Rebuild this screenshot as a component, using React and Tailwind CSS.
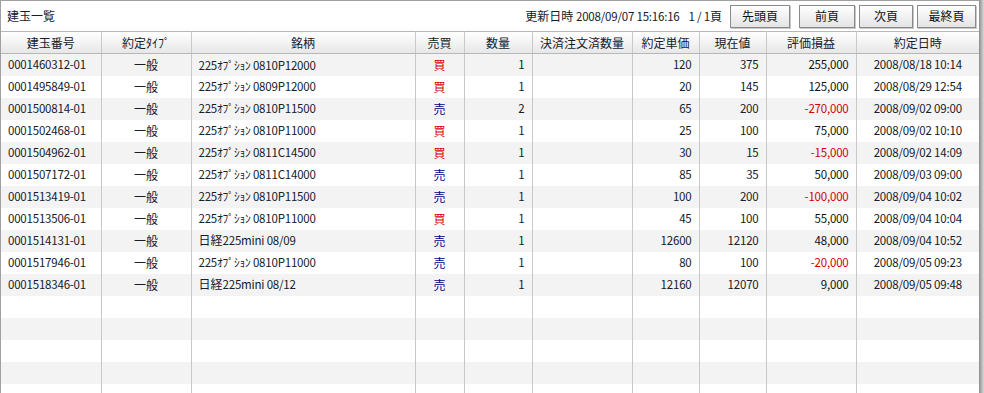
import React from "react";

const rows = [
  ["0001460312-01", "225ｵﾌﾟｼｮﾝ 0810P12000", "買", "1", "120", "375", "255,000", "2008/08/18 10:14"],
  ["0001495849-01", "225ｵﾌﾟｼｮﾝ 0809P12000", "買", "1", "20", "145", "125,000", "2008/08/29 12:54"],
  ["0001500814-01", "225ｵﾌﾟｼｮﾝ 0810P11500", "売", "2", "65", "200", "-270,000", "2008/09/02 09:00"],
  ["0001502468-01", "225ｵﾌﾟｼｮﾝ 0810P11000", "買", "1", "25", "100", "75,000", "2008/09/02 10:10"],
  ["0001504962-01", "225ｵﾌﾟｼｮﾝ 0811C14500", "買", "1", "30", "15", "-15,000", "2008/09/02 14:09"],
  ["0001507172-01", "225ｵﾌﾟｼｮﾝ 0811C14000", "売", "1", "85", "35", "50,000", "2008/09/03 09:00"],
  ["0001513419-01", "225ｵﾌﾟｼｮﾝ 0810P11500", "売", "1", "100", "200", "-100,000", "2008/09/04 10:02"],
  ["0001513506-01", "225ｵﾌﾟｼｮﾝ 0810P11000", "買", "1", "45", "100", "55,000", "2008/09/04 10:04"],
  ["0001514131-01", "日経225mini 08/09", "売", "1", "12600", "12120", "48,000", "2008/09/04 10:52"],
  ["0001517946-01", "225ｵﾌﾟｼｮﾝ 0810P11000", "売", "1", "80", "100", "-20,000", "2008/09/05 09:23"],
  ["0001518346-01", "日経225mini 08/12", "売", "1", "12160", "12070", "9,000", "2008/09/05 09:48"],
];

const headers = ["建玉番号", "約定ﾀｲﾌﾟ", "銘柄", "売買", "数量", "決済注文済数量", "約定単価", "現在値", "評価損益", "約定日時"];
const widths = [100, 90, 224, 49, 68, 100, 67, 67, 90, 123];

// latin text in the original is a narrow bitmap font
const num = "text-[11.5px] tracking-[-0.2px]";

function PageButton({ label, w }) {
  return (
    <button
      className="h-[23px] border border-[#8a8a8a] bg-gradient-to-b from-white to-[#e4e4e4] text-[12px] text-[#111] shadow-[1px_1px_0_#c8c8c8]"
      style={{ width: w }}
    >
      {label}
    </button>
  );
}

export default function App() {
  const empty = [0, 1, 2, 3, 4];
  return (
    <div
      className="flex h-[393px] w-[984px] overflow-hidden bg-white text-[12px] text-[#14202c]"
      style={{ fontFamily: '"MS UI Gothic", "Noto Sans CJK JP", sans-serif' }}
    >
      <div className="flex min-w-0 flex-1 flex-col border-l border-t border-[#a0a0a0]">
        {/* title bar */}
        <div className="flex h-[30px] shrink-0 items-center justify-between pl-[6px] pr-[3px]">
          <span>建玉一覧</span>
          <div className="flex items-center">
            <span className="mr-[9px]">
              更新日時 <span className={num}>2008/09/07 15:16:16</span>
            </span>
            <span className="mr-[8px]">
              <span className={num}>1 / 1</span>頁
            </span>
            <PageButton label="先頭頁" w={60} />
            <div className="w-[9px]" />
            <PageButton label="前頁" w={56} />
            <div className="w-[4px]" />
            <PageButton label="次頁" w={54} />
            <div className="w-[4px]" />
            <PageButton label="最終頁" w={59} />
          </div>
        </div>

        <table className="w-[978px] table-fixed border-collapse">
          <colgroup>
            {widths.map((w, i) => (
              <col key={i} style={{ width: w }} />
            ))}
          </colgroup>
          <thead>
            <tr className="h-[22px] bg-gradient-to-b from-white to-[#e6e6e6]">
              {headers.map((h, i) => (
                <th
                  key={i}
                  className="border-y border-[#b8b8b8] border-r border-r-[#c8c8c8] p-0 text-center font-normal last:border-r-0"
                >
                  {h}
                </th>
              ))}
            </tr>
          </thead>
          <tbody>
            {rows.map((r, i) => (
              <tr key={i} className={`h-[22px] ${i % 2 === 0 ? "bg-[#f3f3f3]" : "bg-white"}`}>
                <td className={`border-r border-[#c8c8c8] pl-[7px] ${num}`}>{r[0]}</td>
                <td className="border-r border-[#c8c8c8] text-center">一般</td>
                <td className="border-r border-[#c8c8c8] pl-[7px] whitespace-nowrap">
                  {r[1].startsWith("日経") ? (
                    <>
                      日経<span className={num}>{r[1].slice(2)}</span>
                    </>
                  ) : (
                    <span className={num}>{r[1]}</span>
                  )}
                </td>
                <td className={`border-r border-[#c8c8c8] text-center ${r[2] === "買" ? "text-[#d00000]" : "text-[#000090]"}`}>
                  {r[2]}
                </td>
                <td className={`border-r border-[#c8c8c8] pr-[7px] text-right ${num}`}>{r[3]}</td>
                <td className="border-r border-[#c8c8c8]"></td>
                <td className={`border-r border-[#c8c8c8] pr-[7px] text-right ${num}`}>{r[4]}</td>
                <td className={`border-r border-[#c8c8c8] pr-[7px] text-right ${num}`}>{r[5]}</td>
                <td className={`border-r border-[#c8c8c8] pr-[7px] text-right ${num} ${r[6].startsWith("-") ? "text-[#d00000]" : "text-[#111]"}`}>
                  {r[6]}
                </td>
                <td className={`text-center ${num}`}>{r[7]}</td>
              </tr>
            ))}
            {empty.map((i) => (
              <tr key={"e" + i} className={`h-[22px] ${i % 2 === 0 ? "bg-white" : "bg-[#f3f3f3]"}`}>
                {widths.map((_, j) => (
                  <td key={j} className={j < 9 ? "border-r border-[#c8c8c8]" : ""}></td>
                ))}
              </tr>
            ))}
          </tbody>
        </table>
      </div>
      {/* right frame edge */}
      <div className="w-[5px] shrink-0 bg-gradient-to-r from-[#8c8c8c] via-[#b4b4b4] to-[#d8d8d8]" />
    </div>
  );
}
